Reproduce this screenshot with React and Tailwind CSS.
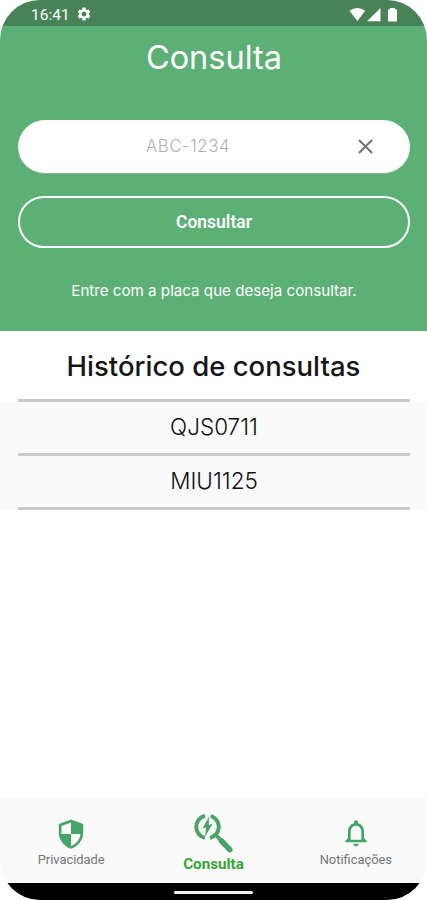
import React from "react";
import { MdSettings, MdClose, MdNotificationsNone } from "react-icons/md";

const plates = ["QJS0711", "MIU1125"];

const StatusIcons = () => (
  <svg width="54" height="16" viewBox="0 0 54 16" fill="#fff">
    <path d="M0.5 3.8 Q8.3 -1.8 16.2 3.8 L8.3 14 Z" />
    <path d="M31.5 1 V14.2 H18 Z" />
    <path d="M41 1 h5 v1.2 h1 a1 1 0 0 1 1 1 V13.6 a1 1 0 0 1 -1 1 h-7 a1 1 0 0 1 -1 -1 V3.2 a1 1 0 0 1 1 -1 h1 Z" />
  </svg>
);

const ShieldIcon = () => (
  <svg width="26" height="30" viewBox="0 0 26 30">
    <path d="M13 0.5 L25.2 5 V13.5 C25.2 21 20.2 27.5 13 29.8 C5.8 27.5 0.8 21 0.8 13.5 V5 Z" fill="#45a567" />
    <path d="M13 3.6 V15 H3.5 V7 Z" fill="#fff" />
    <path d="M13 15 H22.5 C21.8 20.5 18.3 25 13 27 Z" fill="#fff" />
  </svg>
);

const SearchIcon = () => (
  <svg width="42" height="42" viewBox="0 0 42 42" fill="none">
    <path d="M13 3.7 A11.4 11.4 0 0 0 13 25.9" stroke="#49a567" strokeWidth="4" />
    <path d="M18.7 3.9 A11.4 11.4 0 0 1 18 25.9" stroke="#49a567" strokeWidth="4" />
    <path d="M24 23 L29 28.5" stroke="#49a567" strokeWidth="4" />
    <path d="M29.5 29 L37.8 37.7" stroke="#49a567" strokeWidth="5.5" strokeLinecap="round" />
    <path d="M17 4.5 L10.5 16.5 L14 15.2 L13.2 24.5 L20.8 11.5 L16.8 13.2 Z" fill="#49a567" />
  </svg>
);

const App = () => {
  return (
    <div className="h-[900px] w-[427px] overflow-hidden bg-white font-[Inter,sans-serif]">
      <div className="flex h-full flex-col overflow-hidden rounded-[40px] bg-white">
        {/* STATUS BAR */}
        <div className="flex h-[26px] shrink-0 items-center justify-between bg-[#478357] pl-[31px] pr-[24px] pt-[3px]">
          <div className="flex items-center gap-[6px] text-white">
            <span className="pt-[2px] font-[Roboto,sans-serif] text-[15.5px] leading-none">16:41</span>
            <MdSettings size={16} className="-mt-px" />
          </div>
          <StatusIcons />
        </div>

        {/* SEARCH */}
        <header className="flex h-[305px] shrink-0 flex-col bg-[#5db075] pl-[18px] pr-[17px] text-center text-white">
          <h1 className="mt-[12px] text-[32.5px] font-normal leading-[40px]">Consulta</h1>
          <div className="mt-[42px] flex h-[53.5px] shrink-0 items-center rounded-full border-b border-[#8fb99b] bg-white pl-[18px] pr-[32px]">
            <span className="flex-1 pr-[13px] text-[16.7px] font-light leading-none tracking-[0.6px] text-[#b0b0b0]">
              ABC-1234
            </span>
            <MdClose size={25} className="text-[#757575]" />
          </div>
          <button className="mt-[22.5px] h-[52px] shrink-0 rounded-full border-2 border-white pt-px font-[Roboto,sans-serif] text-[17.5px] font-semibold leading-none">
            Consultar
          </button>
          <p className="mt-[33px] text-[15.15px] leading-[20px]">Entre com a placa que deseja consultar.</p>
        </header>

        {/* HISTORY */}
        <main className="flex-1">
          <h2 className="h-[68px] pt-[18px] text-center text-[27.5px] font-medium leading-[34px] text-[#161616]">
            Histórico de consultas
          </h2>
          <div className="ml-[18px] mr-[17px] h-[3px] bg-[#c9c9c9]" />
          <ul className="bg-[#fafafa] pl-[18px] pr-[17px]">
            {plates.map((plate) => (
              <li
                key={plate}
                className="flex h-[54px] items-center justify-center border-b-[3px] border-[#c9c9c9] text-[22.5px] font-light leading-none text-[#111]"
              >
                {plate}
              </li>
            ))}
          </ul>
        </main>

        {/* TABS */}
        <nav className="grid h-[85px] shrink-0 grid-cols-3 bg-[#fafafa] text-center font-[Roboto,sans-serif] text-[12.9px] leading-[16px] text-[#757575]">
          <div className="flex flex-col items-center pt-[21px]">
            <ShieldIcon />
            <span className="mt-[3px]">Privacidade</span>
          </div>
          <div className="flex flex-col items-center pt-[14px]">
            <SearchIcon />
            <span className="mt-[2px] text-[15.2px] font-bold text-[#36a634]">Consulta</span>
          </div>
          <div className="flex flex-col items-center pt-[19px]">
            <MdNotificationsNone size={32} className="text-[#3fa564]" />
            <span className="mt-[3px]">Notificações</span>
          </div>
        </nav>

        {/* HOME INDICATOR */}
        <div className="flex h-[17px] shrink-0 justify-center bg-black pt-[8px]">
          <div className="h-[3px] w-[79px] rounded-full bg-[#f2f2f2]" />
        </div>
      </div>
    </div>
  );
};

export default App;
